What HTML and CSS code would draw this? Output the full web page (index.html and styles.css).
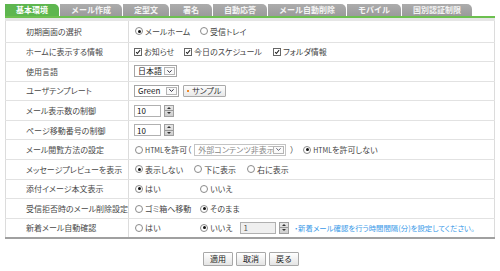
FILE: index.html
```html
<!DOCTYPE html>
<html lang="ja">
<head>
<meta charset="utf-8">
<title>基本環境</title>
<link rel="stylesheet" href="styles.css">
</head>
<body>
<div class="page">
  <ul class="tabs">
    <li class="tab active">基本環境</li>
    <li class="tab">メール作成</li>
    <li class="tab">定型文</li>
    <li class="tab tab-sig">署名</li>
    <li class="tab">自動応答</li>
    <li class="tab">メール自動削除</li>
    <li class="tab">モバイル</li>
    <li class="tab">国別認証制限</li>
  </ul>
  <div class="panel">
    <div class="band"></div>
    <table class="settings">
      <tr class="r1">
        <th>初期画面の選択</th>
        <td><div class="cell">
          <span class="opt w65"><i class="radio on"></i>メールホーム</span>
          <span class="opt"><i class="radio"></i>受信トレイ</span>
        </div></td>
      </tr>
      <tr>
        <th>ホームに表示する情報</th>
        <td><div class="cell">
          <span class="opt w50"><i class="check"><svg viewBox="0 0 8 8"><path d="M1.5 4.2 L3.2 6 L6.8 1.6" fill="none" stroke="#222" stroke-width="1.4"/></svg></i>お知らせ</span>
          <span class="opt w89"><i class="check"><svg viewBox="0 0 8 8"><path d="M1.5 4.2 L3.2 6 L6.8 1.6" fill="none" stroke="#222" stroke-width="1.4"/></svg></i>今日のスケジュール</span>
          <span class="opt"><i class="check"><svg viewBox="0 0 8 8"><path d="M1.5 4.2 L3.2 6 L6.8 1.6" fill="none" stroke="#222" stroke-width="1.4"/></svg></i>フォルダ情報</span>
        </div></td>
      </tr>
      <tr>
        <th>使用言語</th>
        <td><div class="cell">
          <span class="select"><span class="val">日本語</span><span class="arrow"><svg viewBox="0 0 8 6"><path d="M1.5 1.5 L4 4.2 L6.5 1.5" fill="none" stroke="#334" stroke-width="1.2"/></svg></span></span>
        </div></td>
      </tr>
      <tr>
        <th>ユーザテンプレート</th>
        <td><div class="cell">
          <span class="select"><span class="val val-green">Green</span><span class="arrow"><svg viewBox="0 0 8 6"><path d="M1.5 1.5 L4 4.2 L6.5 1.5" fill="none" stroke="#334" stroke-width="1.2"/></svg></span></span>
          <span class="sample"><span class="dot"></span>サンプル</span>
        </div></td>
      </tr>
      <tr>
        <th>メール表示数の制御</th>
        <td><div class="cell">
          <span class="num">10</span>
          <span class="spin"><span class="up"></span><span class="down"></span></span>
        </div></td>
      </tr>
      <tr>
        <th>ページ移動番号の制御</th>
        <td><div class="cell">
          <span class="num">10</span>
          <span class="spin"><span class="up"></span><span class="down"></span></span>
        </div></td>
      </tr>
      <tr>
        <th>メール閲覧方法の設定</th>
        <td><div class="cell">
          <span class="opt"><i class="radio"></i><span class="sm">HTML</span>を許可（</span>
          <span class="select disabled"><span class="val val-ext">外部コンテンツ非表示</span><span class="arrow"><svg viewBox="0 0 8 6"><path d="M1.5 1.5 L4 4.2 L6.5 1.5" fill="none" stroke="#667" stroke-width="1.2"/></svg></span></span>
          <span class="paren">）</span>
          <span class="opt"><i class="radio on"></i><span class="sm">HTML</span>を許可しない</span>
        </div></td>
      </tr>
      <tr>
        <th>メッセージプレビューを表示</th>
        <td><div class="cell">
          <span class="opt gap"><i class="radio on"></i>表示しない</span>
          <span class="opt gap"><i class="radio"></i>下に表示</span>
          <span class="opt"><i class="radio"></i>右に表示</span>
        </div></td>
      </tr>
      <tr>
        <th>添付イメージ本文表示</th>
        <td><div class="cell">
          <span class="opt w65"><i class="radio on"></i>はい</span>
          <span class="opt"><i class="radio"></i>いいえ</span>
        </div></td>
      </tr>
      <tr>
        <th>受信拒否時のメール削除設定</th>
        <td><div class="cell">
          <span class="opt w65"><i class="radio"></i>ゴミ箱へ移動</span>
          <span class="opt"><i class="radio on"></i>そのまま</span>
        </div></td>
      </tr>
      <tr>
        <th>新着メール自動確認</th>
        <td><div class="cell">
          <span class="opt w65"><i class="radio"></i>はい</span>
          <span class="opt tight"><i class="radio on"></i>いいえ</span>
          <span class="num num-wide">1</span>
          <span class="spin"><span class="up"></span><span class="down"></span></span>
          <span class="hint">・新着メール確認を行う時間間隔(分)を設定してください。</span>
        </div></td>
      </tr>
    </table>
  </div>
  <div class="actions">
    <button class="btn">適用</button>
    <button class="btn">取消</button>
    <button class="btn">戻る</button>
  </div>
</div>
</body>
</html>
```
FILE: styles.css
```css
* { box-sizing: border-box; }
body {
  margin: 0;
  background: #fff;
  color: #444;
  font-family: "Noto Sans CJK JP", "Liberation Sans", sans-serif;
  font-size: 8px;
  font-feature-settings: "palt";
}
.page { padding: 4px 5px 0 5px; }

.tabs {
  display: flex;
  list-style: none;
  margin: 0;
  padding: 0;
  height: 12px;
}
.tab {
  height: 12px;
  line-height: 12px;
  padding: 0 11px;
  margin-right: 1px;
  background: linear-gradient(#acacac, #9a9a9a);
  color: #f4f4f4;
  font-weight: bold;
  text-align: center;
  border-radius: 0 5px 0 0;
  white-space: nowrap;
  font-feature-settings: normal;
}
.tab.active { background: #5eb64f; color: #fff; }
.tab-sig { min-width: 42px; }

.panel { border-top: 2px solid #6cc04f; }
.band { height: 3px; background: #e6e6e6; }

.settings {
  width: 100%;
  border-collapse: collapse;
  border-left: 1px solid #dcdcdc;
  border-right: 1px solid #dcdcdc;
  border-bottom: 2px solid #a0a0a0;
}
.settings tr { height: 19.6px; }
.settings tr.r1 { height: 21px; }
.settings th, .settings td {
  padding: 0;
  border-bottom: 1px solid #e2e2e2;
  vertical-align: middle;
  font-weight: normal;
  text-align: left;
  white-space: nowrap;
}
.settings th {
  width: 123px;
  padding-left: 20px;
  border-right: 1px solid #dcdcdc;
  color: #484848;
}
.settings td { padding-left: 5px; }

.cell { display: flex; align-items: center; }

.opt { display: inline-flex; align-items: center; }
.opt.gap { margin-right: 10px; }
.opt.tight { margin-right: 8px; }
.w65 { width: 65px; }
.w50 { width: 50px; }
.w89 { width: 89px; }
.sm { font-size: 7px; }

.radio {
  display: inline-block;
  width: 8px;
  height: 8px;
  border: 1px solid #8a8a8a;
  border-radius: 50%;
  background: #fff;
  margin: 0 2px 0 1px;
  position: relative;
}
.radio.on::after {
  content: "";
  position: absolute;
  left: 1.5px;
  top: 1.5px;
  width: 3px;
  height: 3px;
  border-radius: 50%;
  background: #111;
}

.check {
  display: inline-block;
  width: 8px;
  height: 8px;
  border: 1px solid #666;
  background: #fff;
  margin-right: 2px;
}
.check svg { display: block; width: 6px; height: 6px; }

.select {
  display: inline-flex;
  align-items: stretch;
  height: 12px;
  border: 1px solid #a5a5a5;
  background: #fff;
  padding: 1px;
}
.select .val {
  padding: 0 2px;
  line-height: 8px;
  display: flex;
  align-items: center;
  color: #222;
}
.select .val-green { width: 30px; }
.select .val-ext { width: 77px; color: #888; }
.select .arrow {
  width: 11px;
  border: 1px solid #b5b5b5;
  background: #fafafa;
  display: flex;
  align-items: center;
  justify-content: center;
}
.select .arrow svg { width: 7px; height: 5px; display: block; }
.select.disabled { border-color: #c4c4c4; margin-left: 3px; }

.paren { margin: 0 8px 0 4px; }

.sample {
  display: inline-flex;
  align-items: center;
  height: 12px;
  margin-left: 4px;
  padding: 0 4px 0 3px;
  border: 1px solid #aaa;
  border-radius: 1px;
  background: linear-gradient(#fdfdfd, #e8e8e8);
  color: #333;
}
.sample .dot {
  width: 2px;
  height: 2px;
  background: #f08a2a;
  margin-right: 3px;
}

.num {
  display: inline-flex;
  align-items: center;
  width: 27px;
  height: 12px;
  padding-left: 2px;
  border: 1px solid #b0b0b0;
  background: #fff;
  color: #111;
}
.num-wide { width: 36px; background: #efefef; color: #555; }
.spin {
  display: inline-flex;
  flex-direction: column;
  width: 10px;
  height: 12px;
  margin-left: 3px;
  border: 1px solid #a0a0a0;
  background: linear-gradient(#e8e8e8, #cfcfcf);
}
.spin .up, .spin .down {
  flex: 1;
  position: relative;
}
.spin .up { border-bottom: 1px solid #999; }
.spin .up::after, .spin .down::after {
  content: "";
  position: absolute;
  left: 2px;
  border-left: 2px solid transparent;
  border-right: 2px solid transparent;
}
.spin .up::after { top: 1px; border-bottom: 2px solid #333; }
.spin .down::after { top: 1px; border-top: 2px solid #333; }

.hint { margin-left: 5px; color: #3a9ae8; font-size: 7.4px; }

.actions {
  display: flex;
  justify-content: center;
  gap: 3px;
  margin-top: 13px;
  padding-left: 2px;
}
.btn {
  height: 14px;
  padding: 0 6px;
  border: 1px solid #a8a8a8;
  border-radius: 1px;
  background: linear-gradient(#ffffff, #e4e4e4);
  font-family: inherit;
  font-size: 8px;
  color: #222;
  line-height: 12px;
}
```
